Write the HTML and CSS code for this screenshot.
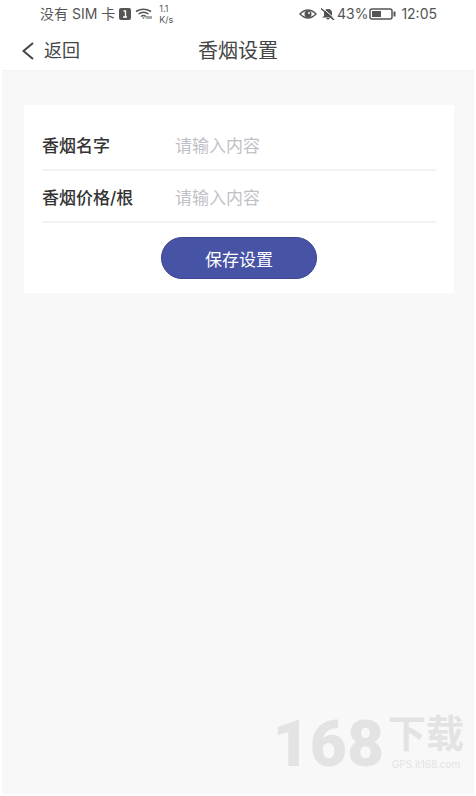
FILE: index.html
```html
<!DOCTYPE html>
<html lang="zh-CN">
<head>
<meta charset="utf-8">
<meta name="viewport" content="width=device-width, initial-scale=1">
<title>香烟设置</title>
<link rel="stylesheet" href="styles.css">
</head>
<body>
<div class="status">
  <div class="status-group">
    <span>没有 SIM 卡</span>
    <svg class="sim" width="12" height="12" viewBox="0 0 12 12"><rect width="12" height="12" rx="2" fill="#555"/><path d="M4.5 3H6.5V9M4 9h4" fill="none" stroke="#fff" stroke-width="1.3"/></svg>
    <svg class="wifi" width="18" height="12" viewBox="0 0 18 12" fill="none" stroke="#555" stroke-width="1.5"><path d="M1 3.5Q8.500-1 16 3.500M3.500 6Q8.500 2.500 13.500 6M6 8.500Q8.500 6.500 11 8.500"/><path d="M7 9.500h3L8.500 11z" fill="#555" stroke="none"/><path d="M12 8v3M14 11V8M16 8v3" stroke-width="1"/></svg>
    <span class="speed"><span>1.1</span><span>K/s</span></span>
  </div>
  <div class="status-group">
    <svg class="eye" width="18" height="12" viewBox="0 0 18 12"><path d="M1 6Q9-2 17 6Q9 14 1 6Z" fill="none" stroke="#555" stroke-width="1.500"/><circle cx="9" cy="6" r="3.500" fill="#555"/><circle cx="10" cy="5" r="1" fill="#fff"/></svg>
    <svg class="bell" width="14" height="12" viewBox="0 0 14 12"><path d="M1 9.500L3 8V5Q3 1 7 1T11 5v3L13 9.500zM5 10h4q-2 3-4 0z" fill="#555"/><path d="M1.500 0L14 11" stroke="#fff" stroke-width="1"/><path d="M0 .500L13 12" stroke="#444" stroke-width="1.300"/></svg>
    <span>43%</span>
    <svg class="battery" width="28" height="12" viewBox="0 0 28 12"><rect x="1" y="1" width="22" height="10" rx="2" fill="none" stroke="#555" stroke-width="1.500"/><rect x="3" y="3" width="9" height="6" fill="#555"/><path d="M25.500 3.500v5" stroke="#555" stroke-width="2"/></svg>
    <span>12:05</span>
  </div>
</div>
<header class="nav">
  <a class="back" href="#">
    <svg width="12" height="18" viewBox="0 0 12 18"><path d="M11 1L1.500 9L11 17" fill="none" stroke="#444" stroke-width="2"/></svg>
    <span>返回</span>
  </a>
  <h1>香烟设置</h1>
</header>
<main>
  <form class="card">
    <div class="field">
      <label for="name">香烟名字</label>
      <input id="name" type="text" placeholder="请输入内容">
    </div>
    <div class="field">
      <label for="price">香烟价格/根</label>
      <input id="price" type="text" placeholder="请输入内容">
    </div>
    <button type="button">保存设置</button>
  </form>
  <div class="mark">
    <span class="mark-number">168</span>
    <div class="mark-side">
      <span class="mark-name">下载</span>
      <span class="mark-site">GPS.it168.com</span>
    </div>
  </div>
</main>
</body>
</html>
```
FILE: styles.css
```css
* {
  box-sizing: border-box;
}

body {
  margin: 0;
  min-height: 100vh;
  padding: 0 2px 2px;
  display: flex;
  flex-direction: column;
  background: #fff;
  color: #444;
  font-family: Inter, "Noto Sans CJK SC", sans-serif;
}

.status {
  display: flex;
  justify-content: space-between;
  height: 28px;
  padding: 0 37px 0 38px;
  font-size: 14px;
  line-height: 28px;
  color: #555;
}

.status-group {
  display: flex;
  align-items: center;
  white-space: nowrap;
}

.sim {
  margin-left: 4px;
}

.wifi {
  margin: 0 6px 0 4px;
}

.speed {
  display: flex;
  flex-direction: column;
  font-size: 9px;
  line-height: 11px;
}

.bell {
  margin: 0 2px 0 4px;
}

.battery {
  margin: 0 4px 0 1px;
}

.nav {
  display: grid;
  grid-template-columns: 1fr auto 1fr;
  align-items: center;
  height: 43px;
  padding: 4px 20px 0;
  border-bottom: 1px solid #f3f3f3;
}

.back {
  display: flex;
  align-items: center;
  gap: 10px;
  color: #444;
  font-size: 18px;
  line-height: 24px;
  text-decoration: none;
}

h1 {
  margin: 0;
  font-size: 20px;
  line-height: 24px;
  font-weight: 400;
}

main {
  flex: 1;
  display: flex;
  flex-direction: column;
  justify-content: space-between;
  padding: 34px 20px 18px 22px;
  background: #f8f8f8;
}

.card {
  display: flex;
  flex-direction: column;
  padding: 14px 18px;
  background: #fff;
}

.field {
  display: flex;
  align-items: center;
  height: 52px;
  padding-top: 4px;
  border-bottom: 2px solid #f2f2f2;
  font-size: 17px;
  line-height: 24px;
}

label {
  width: 133px;
  color: #333;
  font-weight: 500;
}

input {
  flex: 1;
  min-width: 0;
  height: 24px;
  padding: 0;
  border: 0;
  outline: 0;
  background: none;
  color: #333;
  font: inherit;
}

input::placeholder {
  color: #bfc1c8;
  opacity: 1;
}

button {
  align-self: center;
  width: 156px;
  height: 42px;
  margin-top: 14px;
  padding: 0;
  border: 1px solid #3c4590;
  border-radius: 21px;
  background: #4753a4;
  color: #fff;
  font: inherit;
  font-size: 17px;
}

.mark {
  display: flex;
  align-self: flex-end;
  align-items: center;
  gap: 4px;
  margin-right: -10px;
  color: #e3e3e3;
}

.mark-number {
  font-family: Roboto, sans-serif;
  font-size: 64px;
  line-height: 54px;
  font-weight: 900;
}

.mark-side {
  display: flex;
  flex-direction: column;
  align-items: center;
  gap: 6px;
  padding-bottom: 6px;
}

.mark-name {
  font-size: 38px;
  line-height: 38px;
  font-weight: 700;
}

.mark-site {
  font-size: 10px;
  line-height: 12px;
}
```
